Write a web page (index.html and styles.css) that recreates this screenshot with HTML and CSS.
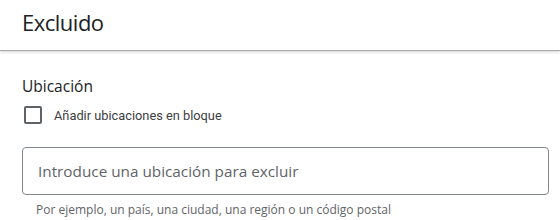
FILE: index.html
```html
<!DOCTYPE html>
<html lang="es">
<head>
  <meta charset="UTF-8">
  <title>Excluido</title>
  <link rel="stylesheet" href="styles.css">
</head>
<body>
  <div class="header">
    <h1>Excluido</h1>
  </div>

  <div class="section">
    <h2>Ubicación</h2>
    <label class="check-row">
      <span class="checkbox"></span>
      <span class="check-label">Añadir ubicaciones en bloque</span>
    </label>

    <div class="field">
      <input type="text" class="field-input" placeholder="Introduce una ubicación para excluir">
    </div>
    <div class="hint">Por ejemplo, un país, una ciudad, una región o un código postal</div>
  </div>
</body>
</html>
```

FILE: styles.css
```css
body {
  margin: 0;
  background: #fff;
  font-family: "Open Sans", Roboto, sans-serif;
  color: #202124;
}
.header {
  height: 50px;
  border-bottom: 1px solid #aaa;
  box-shadow: 0 1px 3px rgba(0,0,0,0.18);
  padding: 0 22px;
}
.header h1 {
  margin: 0;
  padding-top: 7px;
  font-size: 22px;
  font-weight: 400;
  letter-spacing: -0.5px;
  color: #202124;
}
.section {
  padding: 24px 11px 0 22px;
}
.section h2 {
  margin: 0;
  font-size: 15.5px;
  font-weight: 400;
  color: #202124;
}
.check-row {
  display: flex;
  align-items: center;
  margin-top: 9px;
  padding-left: 2px;
}
.checkbox {
  width: 14px;
  height: 14px;
  border: 2px solid #5f6368;
  border-radius: 2px;
}
.check-label {
  margin-left: 12px;
  font-family: Roboto, sans-serif;
  font-size: 12.8px;
  color: #3c4043;
}
.field {
  margin-top: 23px;
}
.field-input {
  box-sizing: border-box;
  width: 527px;
  height: 48px;
  border: 1px solid #80868b;
  border-radius: 4px;
  padding: 0 15px;
  font-family: "Open Sans", sans-serif;
  font-size: 15.3px;
  outline: none;
}
.field-input::placeholder {
  color: #5f6368;
}
.hint {
  margin-top: 6px;
  padding-left: 14px;
  font-size: 12px;
  color: #5f6368;
}
```
